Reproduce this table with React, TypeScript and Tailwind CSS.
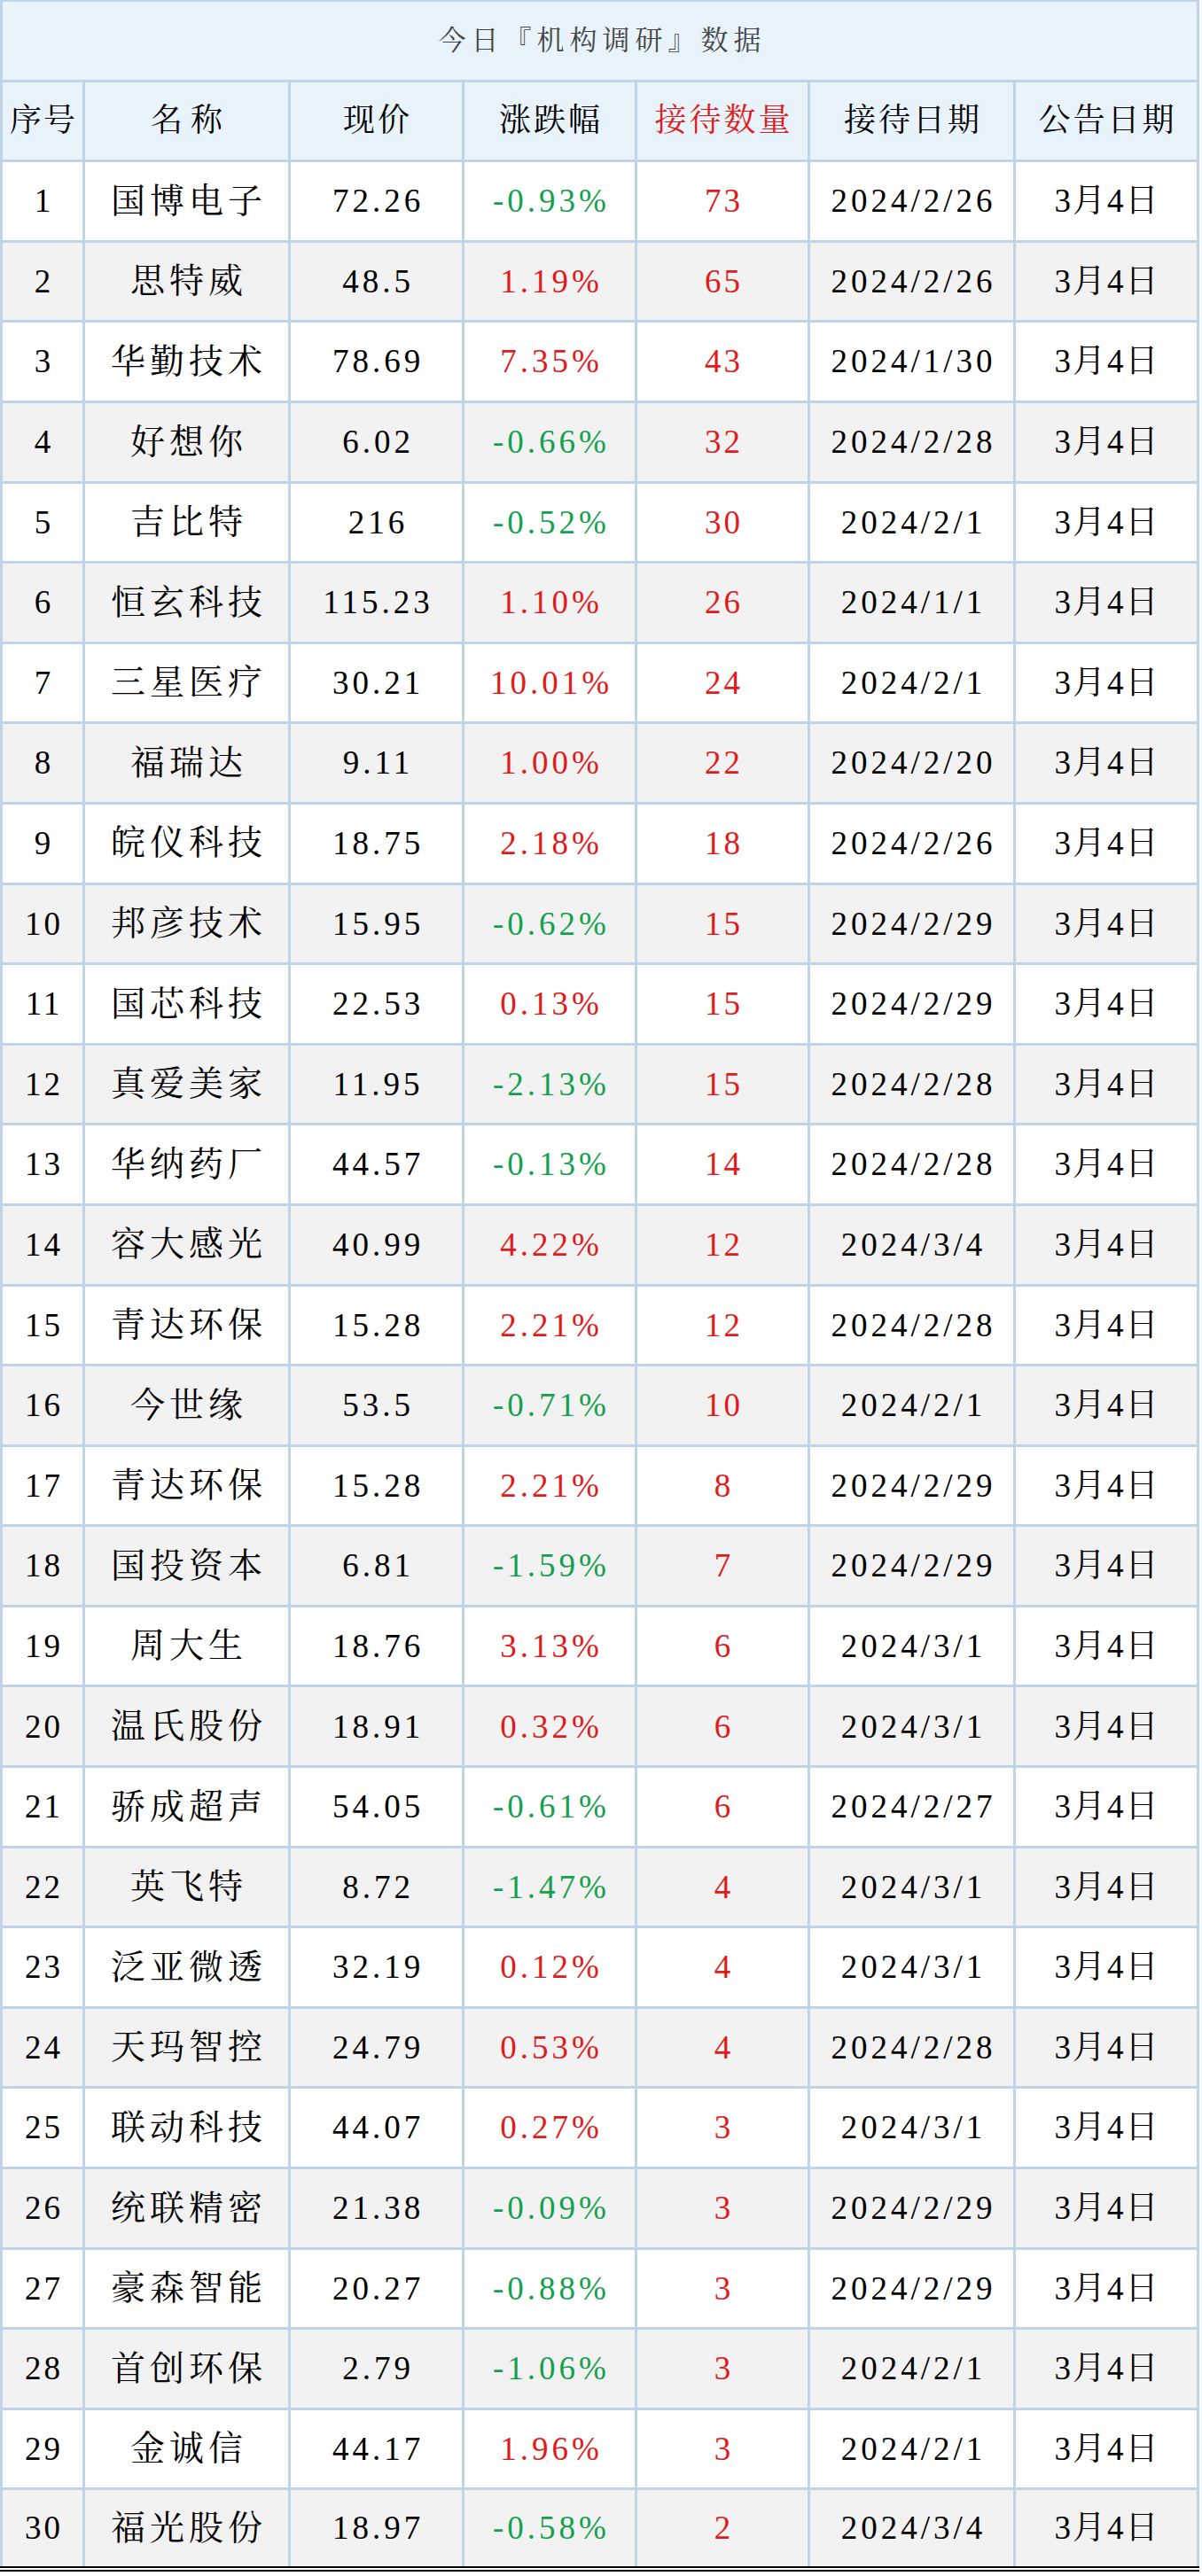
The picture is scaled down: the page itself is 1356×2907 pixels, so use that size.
import React from "react";

type Row = [string, string, string, string, string];

const rows: Row[] = [
  ["国博电子", "72.26", "-0.93%", "73", "2024/2/26"],
  ["思特威", "48.5", "1.19%", "65", "2024/2/26"],
  ["华勤技术", "78.69", "7.35%", "43", "2024/1/30"],
  ["好想你", "6.02", "-0.66%", "32", "2024/2/28"],
  ["吉比特", "216", "-0.52%", "30", "2024/2/1"],
  ["恒玄科技", "115.23", "1.10%", "26", "2024/1/1"],
  ["三星医疗", "30.21", "10.01%", "24", "2024/2/1"],
  ["福瑞达", "9.11", "1.00%", "22", "2024/2/20"],
  ["皖仪科技", "18.75", "2.18%", "18", "2024/2/26"],
  ["邦彦技术", "15.95", "-0.62%", "15", "2024/2/29"],
  ["国芯科技", "22.53", "0.13%", "15", "2024/2/29"],
  ["真爱美家", "11.95", "-2.13%", "15", "2024/2/28"],
  ["华纳药厂", "44.57", "-0.13%", "14", "2024/2/28"],
  ["容大感光", "40.99", "4.22%", "12", "2024/3/4"],
  ["青达环保", "15.28", "2.21%", "12", "2024/2/28"],
  ["今世缘", "53.5", "-0.71%", "10", "2024/2/1"],
  ["青达环保", "15.28", "2.21%", "8", "2024/2/29"],
  ["国投资本", "6.81", "-1.59%", "7", "2024/2/29"],
  ["周大生", "18.76", "3.13%", "6", "2024/3/1"],
  ["温氏股份", "18.91", "0.32%", "6", "2024/3/1"],
  ["骄成超声", "54.05", "-0.61%", "6", "2024/2/27"],
  ["英飞特", "8.72", "-1.47%", "4", "2024/3/1"],
  ["泛亚微透", "32.19", "0.12%", "4", "2024/3/1"],
  ["天玛智控", "24.79", "0.53%", "4", "2024/2/28"],
  ["联动科技", "44.07", "0.27%", "3", "2024/3/1"],
  ["统联精密", "21.38", "-0.09%", "3", "2024/2/29"],
  ["豪森智能", "20.27", "-0.88%", "3", "2024/2/29"],
  ["首创环保", "2.79", "-1.06%", "3", "2024/2/1"],
  ["金诚信", "44.17", "1.96%", "3", "2024/2/1"],
  ["福光股份", "18.97", "-0.58%", "2", "2024/3/4"],
];

const GRID =
  "grid grid-cols-[93px_232px_196px_195px_195px_232px_207px]";
const CELL =
  "flex items-center justify-center border-r-[3px] border-[#c0d4e8] whitespace-nowrap";

export default function App() {
  return (
    <div className="w-[1356px] h-[2907px] bg-white font-['Liberation_Serif','Noto_Serif_CJK_SC','Noto_Sans_CJK_SC',serif] text-black">
      <div className="w-[1353px] border-t-2 border-l-[3px] border-[#c0d4e8]">
        {/* Title */}
        <div className="h-[90.6px] flex items-center justify-center bg-[#e8f3fc] border-r-[3px] border-b-[3px] border-[#c0d4e8] text-[31px] tracking-[6px] pl-[6px] text-[#454545]">
          今日『机构调研』数据
        </div>
        {/* Header */}
        <div className={`${GRID} h-[90.6px] bg-[#e8f3fc] border-b-[3px] border-[#c0d4e8] text-[36px]`}>
          <div className={`${CELL} tracking-[2px] pl-[2px]`}>序号</div>
          <div className={`${CELL} tracking-[9px] pl-[9px]`}>名称</div>
          <div className={`${CELL} tracking-[3px] pl-[3px]`}>现价</div>
          <div className={`${CELL} tracking-[3px] pl-[3px]`}>涨跌幅</div>
          <div className={`${CELL} tracking-[3px] pl-[3px] text-[#e01b1b]`}>接待数量</div>
          <div className={`${CELL} tracking-[3px] pl-[3px]`}>接待日期</div>
          <div className={`${CELL} tracking-[3px] pl-[3px]`}>公告日期</div>
        </div>
        {rows.map((r, i) => {
          const last = i === rows.length - 1;
          const even = i % 2 === 1;
          const neg = r[2].startsWith("-");
          return (
            <div
              key={i}
              className={`${GRID} ${last ? "h-[85.4px]" : "h-[90.6px] border-b-[3px]"} border-[#c0d4e8] ${even ? "bg-[#f2f2f2]" : "bg-white"}`}
            >
              <div className={`${CELL} text-[37px] tracking-[3px] pl-[3px]`}>{i + 1}</div>
              <div className={`${CELL} text-[39px] tracking-[5px] pl-[5px]`}>{r[0]}</div>
              <div className={`${CELL} text-[37px] tracking-[4px] pl-[4px]`}>{r[1]}</div>
              <div
                className={`${CELL} text-[37px] tracking-[4px] pl-[4px] ${neg ? "text-[#15a04e]" : "text-[#e01b1b]"}`}
              >
                {r[2]}
              </div>
              <div className={`${CELL} text-[37px] tracking-[3px] pl-[3px] text-[#e01b1b]`}>{r[3]}</div>
              <div className={`${CELL} text-[37px] tracking-[4px] pl-[4px]`}>{r[4]}</div>
              <div className={`${CELL} text-[37px] tracking-[2px] pl-[2px]`}>3月4日</div>
            </div>
          );
        })}
      </div>
      <div className="w-[1353px] h-[6px] border-y-2 border-black" />
    </div>
  );
}
